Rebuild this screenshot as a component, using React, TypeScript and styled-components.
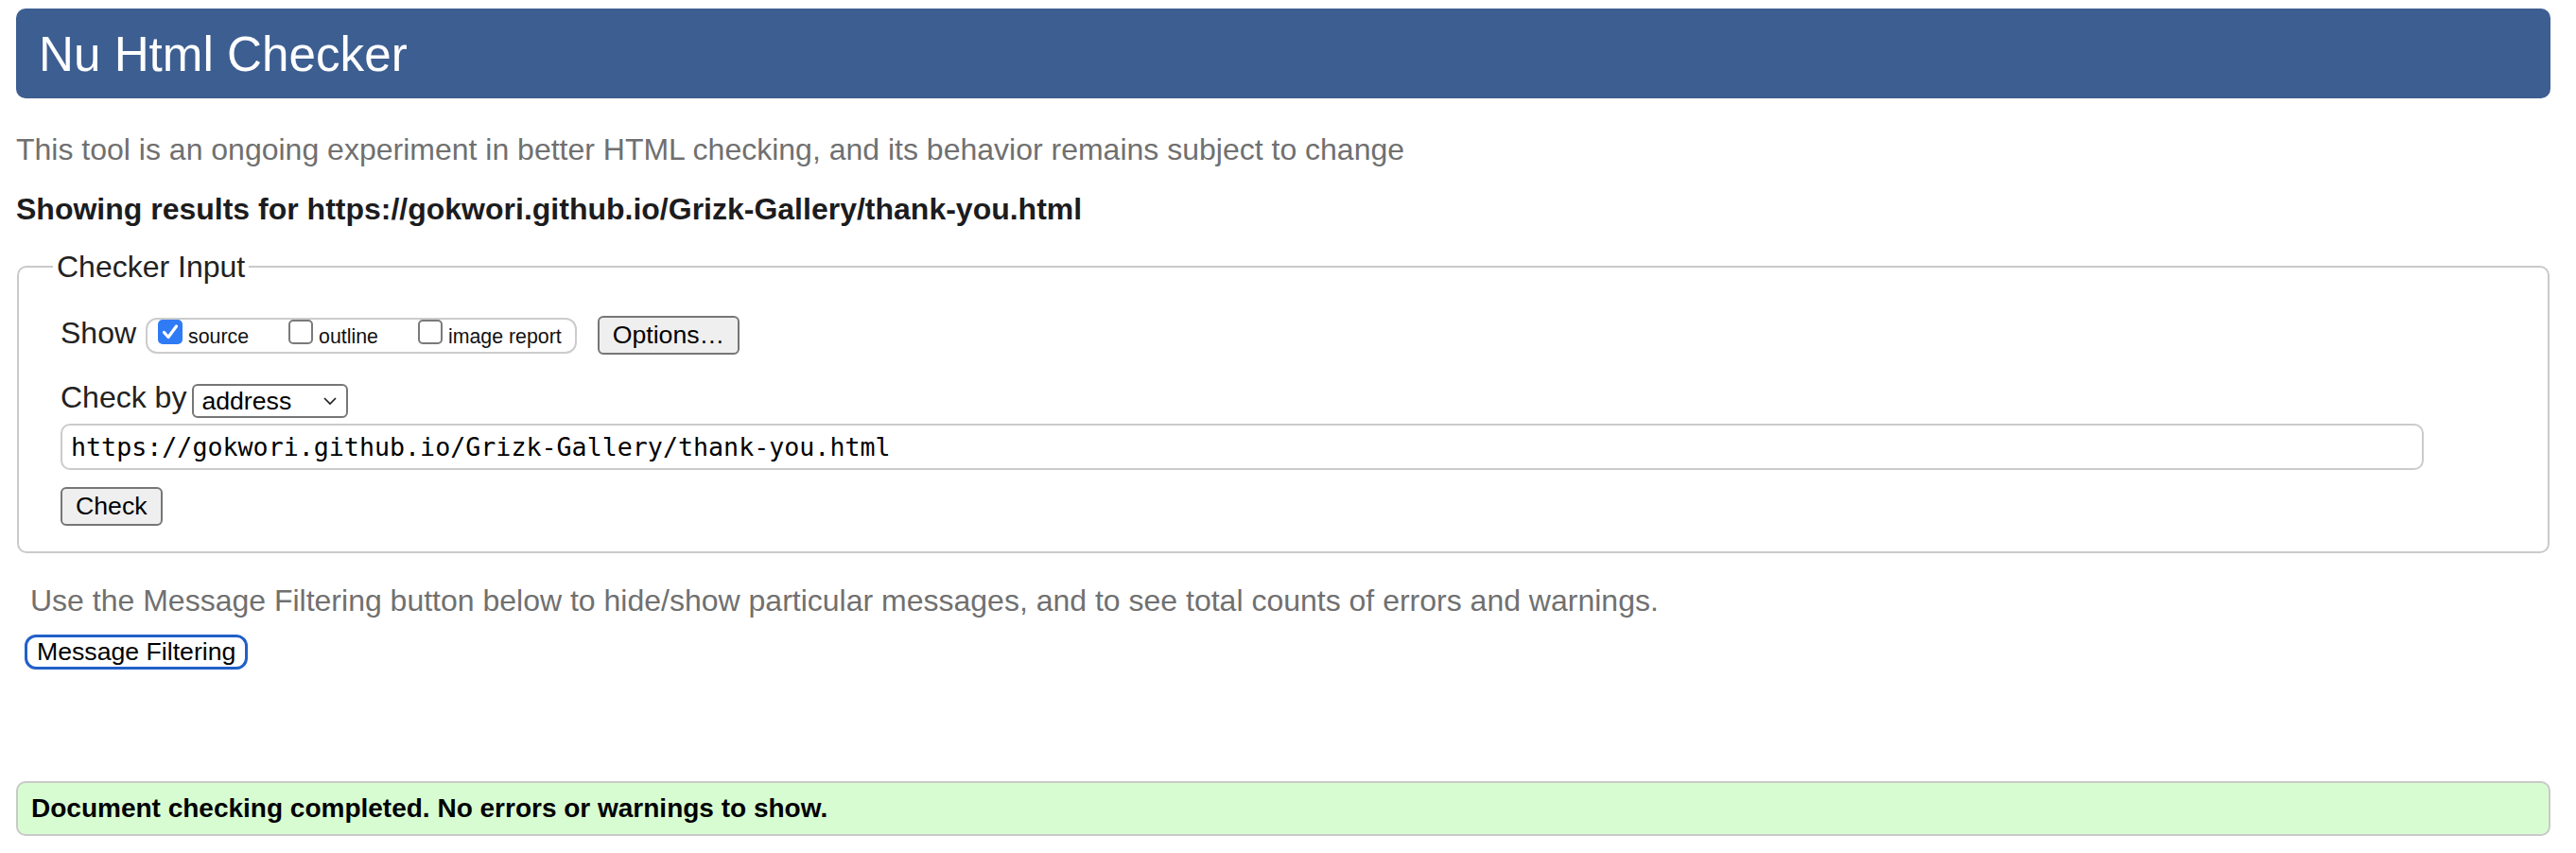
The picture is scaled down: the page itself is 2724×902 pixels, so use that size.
import React from "react";
import styled, { createGlobalStyle } from "styled-components";

const GlobalStyle = createGlobalStyle`
  html, body { margin: 0; padding: 0; background: #ffffff; }
  body {
    font-family: "Liberation Sans", Arial, Helvetica, sans-serif;
    color: #222222;
  }
  * { box-sizing: border-box; }
`;

const Page = styled.div`
  width: 2724px;
  padding: 9px 27px 0 17px;
  display: flex;
  flex-direction: column;
  align-items: stretch;
`;

const Banner = styled.h1`
  margin: 0;
  height: 95px;
  display: flex;
  align-items: center;
  padding: 2px 0 0 24px;
  background: #3d5e91;
  border-radius: 10px;
  color: #ffffff;
  font-weight: 400;
  font-size: 51.2px;
  line-height: 1;
`;

const Lead = styled.p`
  margin: 36px 0 0;
  font-size: 32px;
  line-height: 36px;
  color: #707070;
`;

const ResultFor = styled.p`
  margin: 27px 0 0;
  font-size: 32px;
  line-height: 36px;
  font-weight: 700;
  color: #1c1c1e;
`;

const InputSet = styled.fieldset`
  margin: 25px 1px 0;
  padding: 34px 0 27px 44px;
  border: 2px solid #cacaca;
  border-radius: 10px;
  min-width: 0;
`;

const SetLegend = styled.legend`
  padding: 0 4px;
  margin-left: -8px;
  font-size: 32px;
  line-height: 36px;
  color: #222222;
`;

const Row = styled.div<{ $mt: number }>`
  display: flex;
  align-items: flex-start;
  margin-top: ${(p) => p.$mt}px;
`;

const FieldLabel = styled.span<{ $mt?: number }>`
  font-size: 32px;
  line-height: 36px;
  color: #222222;
  margin-top: ${(p) => p.$mt ?? 0}px;
`;

const ChoiceGroup = styled.div`
  display: flex;
  align-items: flex-start;
  gap: 42px;
  height: 38px;
  margin: 2px 0 0 10px;
  padding: 0 14px 0 11px;
  border: 2px solid #cccccc;
  border-radius: 12px;
`;

const Choice = styled.label`
  display: flex;
  align-items: flex-start;
  gap: 6px;
`;

const Box = styled.span<{ $on: boolean }>`
  width: 26px;
  height: 26px;
  display: flex;
  align-items: center;
  justify-content: center;
  border-radius: 5px;
  background: ${(p) => (p.$on ? "#2f7bf5" : "#ffffff")};
  border: ${(p) => (p.$on ? "none" : "2px solid #7a7a7a")};
`;

const ChoiceText = styled.span`
  font-size: 21.33px;
  line-height: 24px;
  margin-top: 6px;
  color: #111111;
`;

const PlainButton = styled.button<{ $ml?: number; $mt?: number }>`
  margin: ${(p) => p.$mt ?? 0}px 0 0 ${(p) => p.$ml ?? 0}px;
  padding: 3px 14px;
  font-family: "Liberation Sans", Arial, Helvetica, sans-serif;
  font-size: 26.67px;
  line-height: 31px;
  color: #000000;
  background: #efefef;
  border: 2px solid #767676;
  border-radius: 6px;
  align-self: flex-start;
`;

const SelectBox = styled.div`
  width: 165px;
  height: 36px;
  margin: 5px 0 0 6px;
  padding: 0 9px 0 8px;
  display: flex;
  align-items: center;
  justify-content: space-between;
  border: 2px solid #767676;
  border-radius: 6px;
  font-size: 26.67px;
  line-height: 30px;
  color: #000000;
  background: #ffffff;
`;

const UrlField = styled.input`
  display: block;
  width: 95%;
  height: 49px;
  margin-top: 6px;
  padding: 0 9px;
  border: 2px solid #cbcbcb;
  border-radius: 10px;
  font-family: "DejaVu Sans Mono", "Liberation Mono", monospace;
  font-size: 26.67px;
  color: #000000;
  background: #ffffff;
  outline: none;
`;

const Hint = styled.p`
  margin: 32px 0 0;
  padding-left: 15px;
  font-size: 32px;
  line-height: 36px;
  color: #707070;
`;

const FocusButton = styled.button`
  align-self: flex-start;
  margin: 18px 0 0 9px;
  height: 37px;
  padding: 0 10px;
  font-family: "Liberation Sans", Arial, Helvetica, sans-serif;
  font-size: 26.67px;
  line-height: 31px;
  color: #000000;
  background: #ffffff;
  border: 3px solid #2160c8;
  border-radius: 12px;
`;

const Success = styled.div`
  margin-top: 118px;
  padding: 11px 14px;
  background: #d8fcd2;
  border: 2px solid #c9c9c9;
  border-radius: 10px;
  font-size: 28px;
  line-height: 32px;
  font-weight: 700;
  color: #000000;
`;

const CheckMark = () => (
  <svg width="18" height="18" viewBox="0 0 18 18">
    <polyline
      points="2.5,9.5 7,14.5 15.5,3"
      fill="none"
      stroke="#ffffff"
      strokeWidth="3.2"
      strokeLinecap="round"
      strokeLinejoin="round"
    />
  </svg>
);

const Chevron = () => (
  <svg width="16" height="12" viewBox="0 0 16 12">
    <polyline points="2,3 8,9 14,3" fill="none" stroke="#222" strokeWidth="1.7" />
  </svg>
);

const options = [
  { label: "source", on: true },
  { label: "outline", on: false },
  { label: "image report", on: false },
];

export default function App() {
  return (
    <>
      <GlobalStyle />
      <Page>
        <Banner>Nu Html Checker</Banner>
        <Lead>
          This tool is an ongoing experiment in better HTML checking, and its behavior remains subject to change
        </Lead>
        <ResultFor>Showing results for https://gokwori.github.io/Grizk-Gallery/thank-you.html</ResultFor>
        <InputSet>
          <SetLegend>Checker Input</SetLegend>
          <Row $mt={0}>
            <FieldLabel $mt={0}>Show</FieldLabel>
            <ChoiceGroup>
              {options.map((o) => (
                <Choice key={o.label}>
                  <Box $on={o.on}>{o.on && <CheckMark />}</Box>
                  <ChoiceText>{o.label}</ChoiceText>
                </Choice>
              ))}
            </ChoiceGroup>
            <PlainButton $ml={22}>Options…</PlainButton>
          </Row>
          <Row $mt={26}>
            <FieldLabel $mt={1}>Check by</FieldLabel>
            <SelectBox>
              <span>address</span>
              <Chevron />
            </SelectBox>
          </Row>
          <UrlField readOnly value="https://gokwori.github.io/Grizk-Gallery/thank-you.html" />
          <Row $mt={18}>
            <PlainButton>Check</PlainButton>
          </Row>
        </InputSet>
        <Hint>
          Use the Message Filtering button below to hide/show particular messages, and to see total counts of errors and warnings.
        </Hint>
        <FocusButton>Message Filtering</FocusButton>
        <Success>Document checking completed. No errors or warnings to show.</Success>
      </Page>
    </>
  );
}
